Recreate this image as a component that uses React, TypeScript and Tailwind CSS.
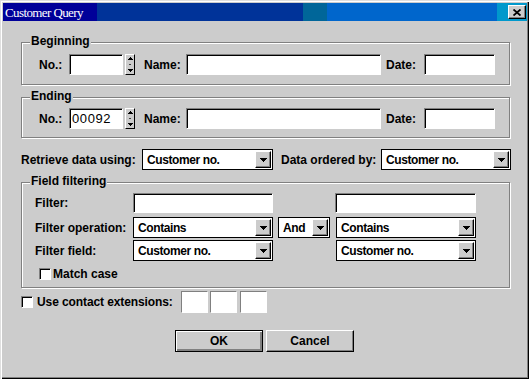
import React from 'react'

type Box = { className?: string; children?: React.ReactNode }

// sunken white edit box
function Edit({ className = '', children }: Box) {
  return (
    <div
      className={`bg-white border border-t-[#808080] border-l-[#808080] border-b-white border-r-white shadow-[inset_1px_1px_0_#000] flex items-center ${className}`}
    >
      {children}
    </div>
  )
}

function Arrow() {
  return (
    <svg width="7" height="4" viewBox="0 0 7 4" shapeRendering="crispEdges">
      <polygon points="0,0 7,0 3.5,4" fill="#000" />
    </svg>
  )
}

function Combo({ value, className = '' }: { value: string; className?: string }) {
  return (
    <div className={`bg-white border border-black flex items-center justify-between p-[1px] ${className}`}>
      <span className="pl-[3px] font-bold text-[12px] tracking-[-0.4px] leading-none">{value}</span>
      <div className="w-[16px] h-full bg-[#cccccc] border border-t-white border-l-white border-r-black border-b-black shadow-[inset_-1px_-1px_0_#808080] flex items-center justify-center">
        <Arrow />
      </div>
    </div>
  )
}

function Spin() {
  return (
    <div className="ml-[2px] w-[10px] h-[21px] bg-[#cccccc] border border-t-white border-l-white border-r-black border-b-black flex flex-col items-center justify-between py-[2px]">
      <svg width="5" height="3" viewBox="0 0 5 3" shapeRendering="crispEdges">
        <polygon points="0,3 5,3 2.5,0" fill="#000" />
      </svg>
      <div className="w-[2px] h-[1px] bg-[#404040]" />
      <svg width="5" height="3" viewBox="0 0 5 3" shapeRendering="crispEdges">
        <polygon points="0,0 5,0 2.5,3" fill="#000" />
      </svg>
    </div>
  )
}

function Check() {
  return (
    <div className="w-[12px] h-[12px] bg-white border border-t-[#808080] border-l-[#808080] border-b-white border-r-white shadow-[inset_1px_1px_0_#000]" />
  )
}

function Group({ title, className = '', children }: { title: string; className?: string; children?: React.ReactNode }) {
  return (
    <div className={`relative w-[489px] border border-[#808080] shadow-[inset_1px_1px_0_#fff,1px_1px_0_#fff] ${className}`}>
      <span className="absolute left-[8px] top-[-9px] px-[1px] bg-[#cccccc] font-bold text-[12px] leading-[14px]">
        {title}
      </span>
      {children}
    </div>
  )
}

function RangeRow({ no }: { no?: string }) {
  return (
    <div className="flex items-center font-bold text-[12px]">
      <span className="w-[30px]">No.:</span>
      <Edit className="w-[54px] h-[21px]">
        {no && <span className="pl-[2px] font-normal text-[13px] tracking-[0.6px] leading-none">{no}</span>}
      </Edit>
      <Spin />
      <span className="ml-[9px] w-[42px]">Name:</span>
      <Edit className="w-[195px] h-[21px]" />
      <span className="ml-[5px] w-[38px]">Date:</span>
      <Edit className="w-[71px] h-[21px]" />
    </div>
  )
}

export default function App() {
  return (
    <div className="w-[529px] h-[379px] overflow-hidden bg-[#cccccc] text-black pt-[3px] pl-[3px] font-['Liberation_Sans',Arial,sans-serif] shadow-[inset_1px_1px_0_#dfdfdf,inset_2px_2px_0_#fff,inset_-1px_-1px_0_#000,inset_-2px_-2px_0_#808080]">
      {/* Title bar */}
      <div className="w-[524px] h-[18px] flex items-center justify-between bg-[linear-gradient(90deg,#000099_0px,#000099_94px,#003399_94px,#003399_300px,#006699_300px,#006699_324px,#0066cc_324px,#0066cc_494px,#0099cc_494px)]">
        <span className="pl-[2px] text-white text-[13px] tracking-[-0.6px] leading-none font-['Liberation_Serif','Times_New_Roman',serif]">
          Customer Query
        </span>
        <button className="mr-[1px] w-[18px] h-[14px] bg-[#cccccc] border border-t-white border-l-white border-r-black border-b-black shadow-[inset_-1px_-1px_0_#808080] flex items-center justify-center">
          <svg width="8" height="7" viewBox="0 0 8 7">
            <path d="M0.5 0.5L7.5 6.5M7.5 0.5L0.5 6.5" stroke="#000" strokeWidth="1.8" />
          </svg>
        </button>
      </div>

      {/* Body */}
      <div className="pl-[18px]">
        <Group title="Beginning" className="mt-[21px] h-[43px] pt-[11px] pl-[17px]">
          <RangeRow />
        </Group>

        <Group title="Ending" className="mt-[12px] h-[41px] pt-[10px] pl-[17px]">
          <RangeRow no="00092" />
        </Group>

        <div className="mt-[11px] flex items-center font-bold text-[12px]">
          <span className="w-[121px]">Retrieve data using:</span>
          <Combo value="Customer no." className="w-[131px] h-[21px]" />
          <span className="ml-[8px] w-[100px]">Data ordered by:</span>
          <Combo value="Customer no." className="w-[130px] h-[21px]" />
        </div>

        <Group title="Field filtering" className="mt-[12px] h-[106px] pt-[10px] pl-[13px]">
          <div className="flex items-center font-bold text-[12px]">
            <span className="w-[98px]">Filter:</span>
            <Edit className="w-[140px] h-[20px]" />
            <Edit className="ml-[62px] w-[141px] h-[20px]" />
          </div>
          <div className="mt-[4px] flex items-center font-bold text-[12px]">
            <span className="w-[98px]">Filter operation:</span>
            <Combo value="Contains" className="w-[140px] h-[21px]" />
            <Combo value="And" className="ml-[5px] w-[52px] h-[21px]" />
            <Combo value="Contains" className="ml-[6px] w-[140px] h-[21px]" />
          </div>
          <div className="mt-[2px] flex items-center font-bold text-[12px]">
            <span className="w-[98px]">Filter field:</span>
            <Combo value="Customer no." className="w-[140px] h-[21px]" />
            <Combo value="Customer no." className="ml-[63px] w-[140px] h-[21px]" />
          </div>
          <div className="mt-[7px] ml-[4px] flex items-center font-bold text-[12px]">
            <Check />
            <span className="ml-[2px] leading-[12px]">Match case</span>
          </div>
        </Group>

        <div className="mt-[3px] h-[22px] flex items-center font-bold text-[12px]">
          <Check />
          <span className="ml-[4px] w-[144px] tracking-[-0.1px]">Use contact extensions:</span>
          <Edit className="w-[27px] h-[22px] shadow-none" />
          <Edit className="ml-[2px] w-[27px] h-[22px] shadow-none" />
          <Edit className="ml-[3px] w-[27px] h-[22px] shadow-none" />
        </div>

        <div className="mt-[17px] ml-[154px] flex font-bold text-[12px]">
          <button className="w-[88px] h-[22px] bg-[#cccccc] border border-black shadow-[inset_1px_1px_0_#fff,inset_-1px_-1px_0_#808080,inset_-2px_-2px_0_#808080]">
            OK
          </button>
          <button className="ml-[3px] w-[88px] h-[22px] bg-[#cccccc] border border-t-white border-l-white border-r-black border-b-black shadow-[inset_-1px_-1px_0_#808080]">
            Cancel
          </button>
        </div>
      </div>
    </div>
  )
}
